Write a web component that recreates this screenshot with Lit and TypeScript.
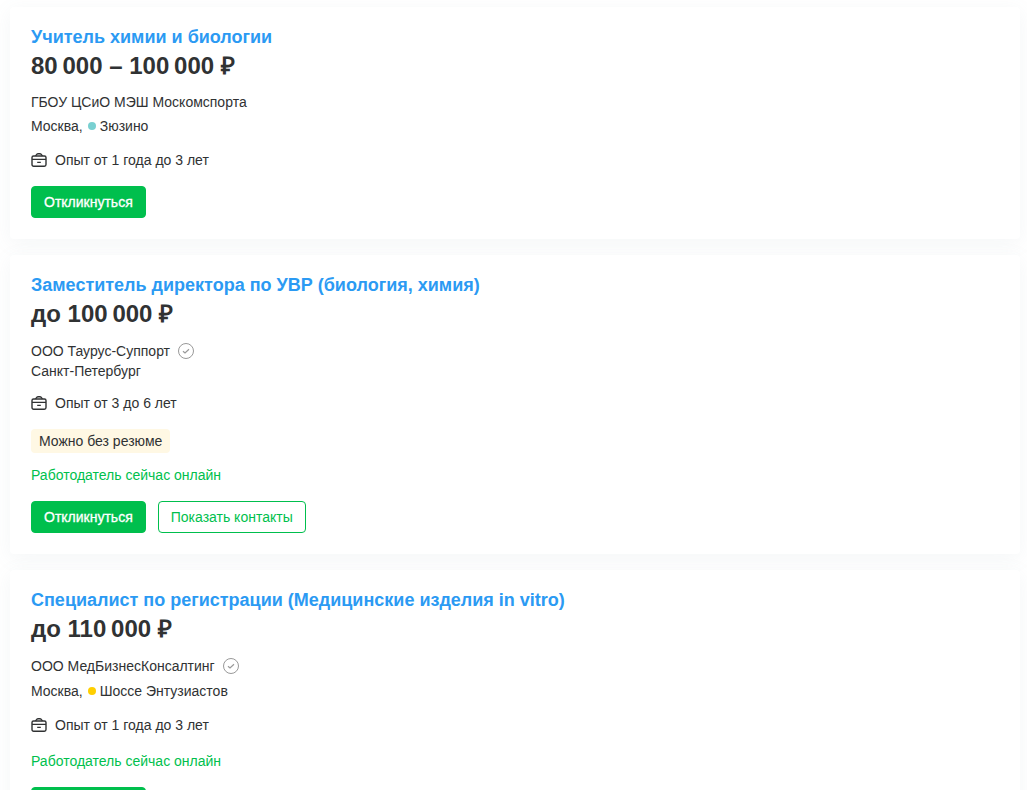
import { LitElement, html, css, nothing } from "lit";
import { customElement, property } from "lit/decorators.js";

interface Vacancy {
  title: string;
  salary: string;
  company: string;
  verified?: boolean;
  city: string;
  metro?: string;
  metroColor?: string;
  experience: string;
  tag?: string;
  online?: boolean;
  contacts?: boolean;
}

const vacancies: Vacancy[] = [
  {
    title: "Учитель химии и биологии",
    salary: "80\u202f000 – 100\u202f000 ₽",
    company: "ГБОУ ЦСиО МЭШ Москомспорта",
    city: "Москва",
    metro: "Зюзино",
    metroColor: "#79d0d1",
    experience: "Опыт от 1 года до 3 лет",
  },
  {
    title: "Заместитель директора по УВР (биология, химия)",
    salary: "до 100\u202f000 ₽",
    company: "ООО Таурус-Суппорт",
    verified: true,
    city: "Санкт-Петербург",
    experience: "Опыт от 3 до 6 лет",
    tag: "Можно без резюме",
    online: true,
    contacts: true,
  },
  {
    title: "Специалист по регистрации (Медицинские изделия in vitro)",
    salary: "до 110\u202f000 ₽",
    company: "ООО МедБизнесКонсалтинг",
    verified: true,
    city: "Москва",
    metro: "Шоссе Энтузиастов",
    metroColor: "#ffcf00",
    experience: "Опыт от 1 года до 3 лет",
    online: true,
  },
];

const briefcase = html`<svg class="case" viewBox="0 0 16 16" width="16" height="16" fill="none" stroke="currentColor" stroke-width="1.4" aria-hidden="true">
  <rect x="1" y="4" width="14" height="10.2" rx="1.6" />
  <path d="M4.6 4 5.2 3Q5.9 1.8 7 1.8H9Q10.1 1.8 10.8 3L11.4 4M1 7.4H15M6.2 10.4H9.8" />
</svg>`;

const verifiedMark = html`<svg class="verified" viewBox="0 0 16 16" width="16" height="16" fill="none" stroke="#999" role="img" aria-label="Проверенная компания">
  <circle cx="8" cy="8" r="7.5" />
  <path d="M5 8.2 7 10 11 6.2" stroke-width="1.2" />
</svg>`;

@customElement("vacancy-card")
class VacancyCard extends LitElement {
  @property({ attribute: false }) vacancy!: Vacancy;

  static styles = css`
    :host {
      display: block;
      padding: 18px 21px 21px;
      border-radius: 4px;
      background: #fff;
      box-shadow: 0 4px 20px rgba(112, 146, 155, 0.08);
      color: #303233;
      font: 14px/20px "Liberation Sans", Arial, sans-serif;
    }
    .title {
      margin: 0;
      font-size: 18px;
      line-height: 24px;
    }
    .title a {
      color: #2b9af3;
      text-decoration: none;
    }
    .salary {
      margin-bottom: 9px;
      font-size: 24px;
      line-height: 34px;
      font-weight: 700;
    }
    .company {
      display: flex;
      align-items: center;
      gap: 8px;
    }
    .company a {
      color: inherit;
      text-decoration: none;
    }
    .company.checked {
      line-height: 22px;
    }
    .verified {
      display: block;
    }
    .place {
      line-height: 19px;
    }
    .place.metro {
      display: flex;
      align-items: center;
      margin-top: 2px;
      line-height: 24px;
    }
    .dot {
      width: 8px;
      height: 8px;
      margin: 0 4px 0 5px;
      border-radius: 50%;
    }
    .experience {
      display: flex;
      align-items: center;
      gap: 8px;
      margin-top: 12px;
    }
    .tag {
      width: fit-content;
      margin: 16px 0 -4px;
      padding: 2px 8px;
      border-radius: 4px;
      background: #fff8e4;
    }
    .online {
      margin-top: 16px;
      color: #00bf4d;
    }
    .actions {
      display: flex;
      gap: 12px;
      margin-top: 16px;
    }
    button {
      padding: 5px 12px;
      border: 1px solid #00bf4d;
      border-radius: 4px;
      background: #fff;
      color: #00bf4d;
      font: inherit;
      cursor: pointer;
    }
    .primary {
      background: #00bf4d;
      color: #fff;
      -webkit-text-stroke: 0.3px #fff;
    }
  `;

  render() {
    const v = this.vacancy;
    return html`
      <h2 class="title"><a href="#">${v.title}</a></h2>
      <div class="salary">${v.salary}</div>
      <div class="company ${v.verified ? "checked" : ""}">
        <a href="#">${v.company}</a>${v.verified ? verifiedMark : nothing}
      </div>
      ${v.metro
        ? html`<div class="place metro"><span>${v.city},</span><span class="dot" style="background:${v.metroColor}"></span><span>${v.metro}</span></div>`
        : html`<div class="place">${v.city}</div>`}
      <div class="experience">${briefcase}<span>${v.experience}</span></div>
      ${v.tag ? html`<div class="tag">${v.tag}</div>` : nothing}
      ${v.online ? html`<div class="online">Работодатель сейчас онлайн</div>` : nothing}
      <div class="actions">
        <button type="button" class="primary">Откликнуться</button>
        ${v.contacts ? html`<button type="button">Показать контакты</button>` : nothing}
      </div>
    `;
  }
}

@customElement("app-root")
class AppRoot extends LitElement {
  static styles = css`
    :host {
      display: block;
      background: #fff;
    }
    .list {
      display: flex;
      flex-direction: column;
      gap: 16px;
      padding: 7px 7px 16px 10px;
    }
  `;

  render() {
    return html`<main class="list">
      ${vacancies.map((v) => html`<vacancy-card .vacancy=${v}></vacancy-card>`)}
    </main>`;
  }
}
